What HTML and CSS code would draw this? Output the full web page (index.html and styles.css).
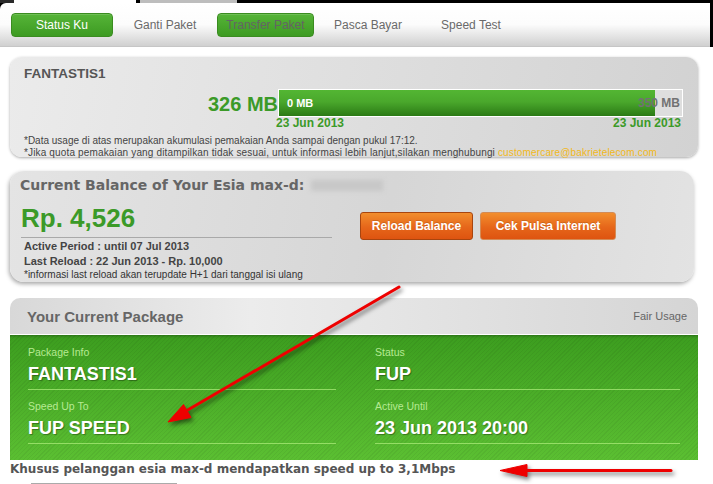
FILE: index.html
```html
<!DOCTYPE html>
<html>
	<head>
		<meta charset="UTF-8">
		<title>Status Ku</title>
		<link rel="stylesheet" href="styles.css">
	</head>

	<body>

		<div class="screen">

			<div class="strip">
				<span class="s-dark"></span>
				<span class="s-white"></span>
				<span class="s-gray"></span>
			</div>

			<div class="navrow">
				<nav class="tabs">
					<a class="tab on t1">Status Ku</a>
					<a class="tab t2">Ganti Paket</a>
					<a class="tab on dim t3">Transfer Paket</a>
					<a class="tab t4">Pasca Bayar</a>
					<a class="tab t5">Speed Test</a>
				</nav>
			</div>

			<main class="content">

				<section class="box usage">
					<h3 class="plan">FANTASTIS1</h3>
					<div class="meter">
						<div class="used">326 MB</div>
						<div class="bar">
							<div class="fill" style="width: 93.2%"><span>0 MB</span></div>
							<span class="cap">350 MB</span>
						</div>
					</div>
					<div class="dates">
						<span>23 Jun 2013</span>
						<span>23 Jun 2013</span>
					</div>
					<p class="notes">
						*Data usage di atas merupakan akumulasi pemakaian Anda sampai dengan pukul 17:12.<br>
						<span class="wide">*Jika quota pemakaian yang ditampilkan tidak sesuai, untuk informasi lebih lanjut,silakan menghubungi <span class="mail">customercare@bakrietelecom.com</span></span>
					</p>
				</section>

				<section class="box balance">
					<h3 class="bal-title">Current Balance of Your Esia max-d: <span class="blur"></span></h3>
					<div class="bal-body">
						<div class="bal-info">
							<div class="amount">Rp. 4,526</div>
							<div class="meta">
								<p>Active Period : until 07 Jul 2013</p>
								<p>Last Reload : 22 Jun 2013 - Rp. 10,000</p>
								<p class="small">*informasi last reload akan terupdate H+1 dari tanggal isi ulang</p>
							</div>
						</div>
						<div class="actions">
							<a class="btn b1">Reload Balance</a>
							<a class="btn b2">Cek Pulsa Internet</a>
						</div>
					</div>
				</section>

				<section class="package">
					<div class="pkg-head">
						<h2>Your Current Package</h2>
						<span>Fair Usage</span>
					</div>
					<div class="pkg-body">
						<div class="field">
							<div class="lbl">Package Info</div>
							<div class="val">FANTASTIS1</div>
						</div>
						<div class="field">
							<div class="lbl">Status</div>
							<div class="val">FUP</div>
						</div>
						<div class="field">
							<div class="lbl">Speed Up To</div>
							<div class="val">FUP SPEED</div>
						</div>
						<div class="field">
							<div class="lbl">Active Until</div>
							<div class="val">23 Jun 2013 20:00</div>
						</div>
					</div>
				</section>

				<p class="promo">Khusus pelanggan esia max-d mendapatkan speed up to 3,1Mbps</p>
				<div class="rule"></div>

			</main>

			<!-- annotation arrows drawn over the page -->
			<svg class="arrows" width="713" height="484" viewBox="0 0 713 484">
				<g fill="#ee0000" stroke="#ee0000">
					<line x1="399" y1="287" x2="186" y2="411" stroke-width="3" stroke-linecap="round"/>
					<polygon points="168,422 183.5,404.5 191,417.5" stroke-width="1"/>
					<line x1="671" y1="470.5" x2="524" y2="470.5" stroke-width="3" stroke-linecap="round"/>
					<polygon points="500,470.5 527,464.5 527,476.5" stroke-width="1"/>
				</g>
			</svg>

		</div>

	</body>

</html>
```

FILE: styles.css
```css
* { margin: 0; padding: 0; box-sizing: border-box }

body {
	background: #fff;
	font-family: "Liberation Sans", Arial, sans-serif;
}

.screen {
	position: relative;
	width: 713px;
	height: 484px;
	overflow: hidden;
}

/* top edge of the captured window */
.strip { display: flex; height: 3px; background: #000 }
.s-dark { width: 14px; background: #2a2a2a }
.s-white { width: 122px; background: #fff }
.s-gray { width: 97px; margin-left: 4px; background: #bdbdbd }

.navrow {
	display: flex;
	height: 44px;
	background: #000;
}

.tabs {
	width: 710px;
	display: flex;
	align-items: center;
	padding-left: 11px;
	border-top-left-radius: 6px;
	background: linear-gradient(#fff 0, #fcfcfc 50%, #d0d0d0 100%);
	border-bottom: 1px solid #c6c6c6;
}

.tab {
	height: 24px;
	line-height: 24px;
	text-align: center;
	font-size: 12px;
	color: #6a6a6a;
}

.tab.on {
	color: #fff;
	line-height: 22px;
	border: 1px solid #3a8c20;
	border-radius: 4px;
	background: linear-gradient(#56b438, #3d9b22);
	box-shadow: inset 0 1px 0 rgba(255,255,255,.15);
}

.tab.dim { color: #646464 }

.t1 { width: 102px }
.t2 { width: 104px }
.t3 { width: 97px }
.t4 { width: 108px }
.t5 { width: 98px }

.content { padding-left: 10px }

.box { border-radius: 12px }

/* usage meter */
.usage {
	margin-top: 10px;
	width: 688px;
	height: 100px;
	padding: 9px 15px 0 14px;
	background: linear-gradient(100deg, #ebebeb, #d2d2d2);
	box-shadow: 0 1px 3px rgba(0,0,0,.35);
}

.plan {
	font-size: 13.5px;
	line-height: 15px;
	color: #555;
}

.meter {
	display: grid;
	grid-template-columns: 1fr 405px;
	align-items: center;
	margin-top: 6px;
}

.used {
	text-align: right;
	font-size: 20px;
	font-weight: bold;
	line-height: 28px;
	color: #3b9a28;
	padding-top: 3px;
}

.bar {
	position: relative;
	height: 28px;
	border: 1px solid #fff;
	background: #dedede;
}

.fill {
	height: 100%;
	padding-left: 8px;
	display: flex;
	align-items: center;
	background: linear-gradient(#53b633, #4aa82c 45%, #2b7a15);
}

.fill span {
	font-size: 11px;
	font-weight: bold;
	color: #fff;
}

.cap {
	position: absolute;
	right: 2px;
	top: 6px;
	font-size: 12px;
	font-weight: bold;
	color: #727272;
}

.dates {
	display: flex;
	justify-content: space-between;
	margin: -1px 2px 0 252px;
	font-size: 12px;
	font-weight: bold;
	line-height: 12px;
	color: #3b9a28;
}

.notes {
	margin-top: 6px;
	font-size: 10px;
	line-height: 12px;
	color: #444;
}

.wide { letter-spacing: 0.15px }

.mail { color: #f2b81b }

/* balance */
.balance {
	margin-top: 14px;
	width: 684px;
	height: 111px;
	padding: 5px 0 0 10px;
	border-radius: 14px;
	background: linear-gradient(100deg, #e4e4e4, #d6d6d6 55%, #e3e3e3);
	box-shadow: -1px 2px 4px rgba(0,0,0,.35);
}

.bal-title {
	display: flex;
	align-items: center;
	gap: 7px;
	font-family: "DejaVu Sans", Verdana, sans-serif;
	font-size: 14px;
	line-height: 18px;
	color: #666;
}

.blur {
	width: 72px;
	height: 11px;
	background: #c8c8c8;
	filter: blur(2px);
}

.bal-body { display: flex }

.bal-info { width: 312px }

.amount {
	margin: 8px 0 0 1px;
	width: 311px;
	padding-bottom: 3px;
	border-bottom: 1px solid #a9a9a9;
	font-size: 26px;
	font-weight: bold;
	line-height: 32px;
	color: #3b9a28;
}

.meta {
	padding: 1px 0 0 4px;
	font-size: 11px;
	font-weight: bold;
	line-height: 15px;
	color: #444;
}

.meta .small {
	font-size: 10px;
	font-weight: normal;
	line-height: 11px;
	color: #333;
}

.actions {
	display: flex;
	gap: 7px;
	margin: 18px 0 0 28px;
}

.btn {
	height: 28px;
	text-align: center;
	font-size: 12px;
	font-weight: bold;
	line-height: 26px;
	color: #fff;
	border: 1px solid #a8450f;
	border-radius: 3px;
	background: linear-gradient(#f28e2d, #e6661a 55%, #de5410);
	text-shadow: 0 -1px 0 rgba(0,0,0,.15);
}

.b1 { width: 113px }
.b2 { width: 136px; border-color: #d48b55 }

/* current package */
.package {
	margin-top: 16px;
	width: 688px;
}

.pkg-head {
	height: 37px;
	display: flex;
	align-items: center;
	justify-content: space-between;
	padding: 0 11px 0 17px;
	border-radius: 10px 10px 0 0;
	border-bottom: 1px solid #fff;
	background: linear-gradient(90deg, #d8d8d8, #ececec 35%, #d5d5d5);
}

.pkg-head h2 {
	font-size: 15px;
	color: #666;
}

.pkg-head span {
	font-size: 11px;
	color: #666;
}

.pkg-body {
	height: 125px;
	padding: 1px 18px 0 18px;
	display: grid;
	grid-template-columns: 308px 305px;
	column-gap: 39px;
	align-content: start;
	background:
		repeating-linear-gradient(-45deg, rgba(0,0,0,.05) 0 1px, transparent 1px 3px),
		linear-gradient(#3c9d1f, #5bbf32);
	box-shadow: inset 0 3px 3px -2px rgba(0,0,0,.3);
}

.field {
	padding: 10px 0 5px;
	border-bottom: 1px solid rgba(170,235,120,.75);
}

.lbl {
	font-size: 10.5px;
	line-height: 12px;
	color: #b6ea92;
}

.val {
	margin-top: 6px;
	font-size: 18px;
	font-weight: bold;
	line-height: 20px;
	color: #fff;
	text-shadow: 1px 1px 1px rgba(0,0,0,.35);
}

.promo {
	font-family: "DejaVu Sans", Verdana, sans-serif;
	font-size: 12px;
	font-weight: bold;
	line-height: 18px;
	color: #555;
}

.rule {
	margin: 5px 0 0 21px;
	width: 146px;
	height: 1px;
	background: #aaa;
}

.arrows {
	position: absolute;
	top: 0;
	left: 0;
	pointer-events: none;
	filter: drop-shadow(2px 3px 2px rgba(0,0,0,.5));
}
```
